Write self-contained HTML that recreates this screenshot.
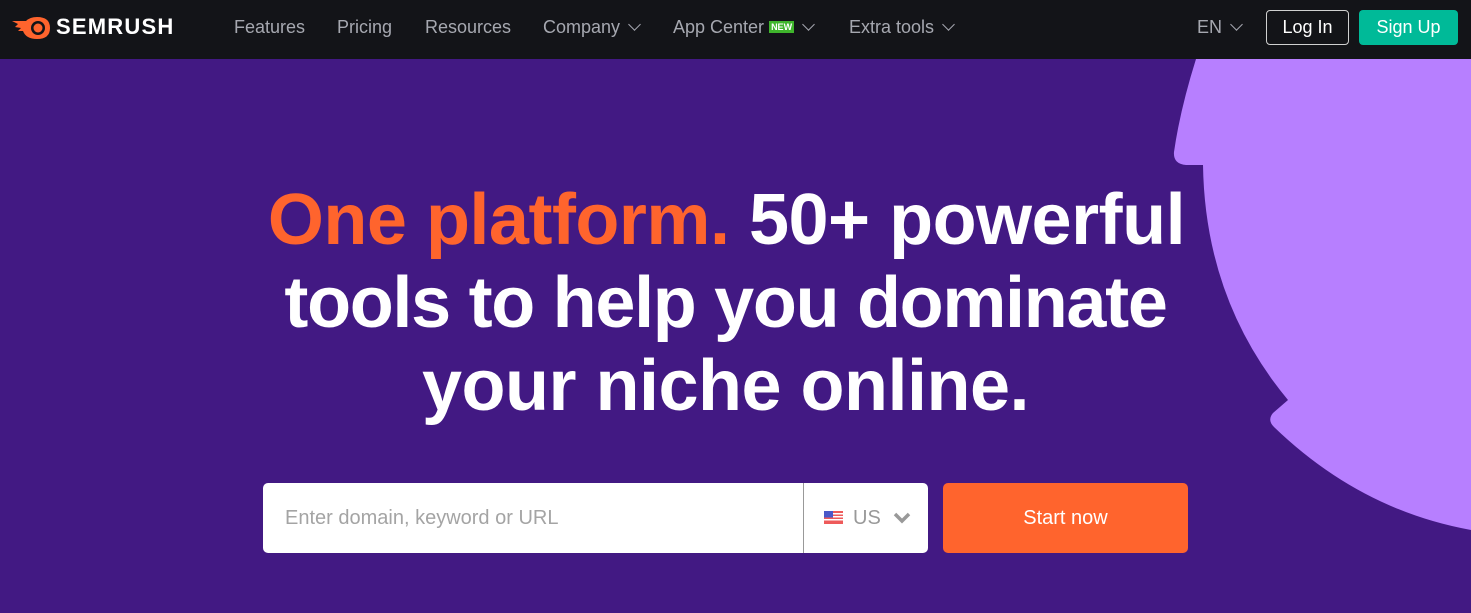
<!DOCTYPE html>
<html><head><meta charset="utf-8"><style>
*{margin:0;padding:0;box-sizing:border-box}
body{width:1471px;height:613px;overflow:hidden;background:#421983;font-family:"Liberation Sans",sans-serif;position:relative}
.nav{position:absolute;left:0;top:0;width:1471px;height:59px;background:#131418}
.nav .it{position:absolute;top:17px;font-size:18px;color:#a6a8b0}
.chev{display:inline-block;width:9px;height:9px;border-right:1.5px solid #a6a8b0;border-bottom:1.5px solid #a6a8b0;transform:rotate(45deg);margin-left:10px;position:relative;top:-4px}
.logo{position:absolute;left:56px;top:14px;font-size:22px;font-weight:bold;color:#fff;letter-spacing:1.2px}
.h{position:absolute;left:0;width:1471px;text-align:center;font-weight:bold;font-size:72px;color:#fff;white-space:nowrap;letter-spacing:-0.5px}
.o{color:#ff642d}
</style></head><body>
<svg style="position:absolute;left:0;top:0" width="1471" height="613">
<path d="M1196 59 Q1180 110 1174 152 Q1173 164 1186 165 L1203 165 Q1205 300 1288 400 L1273 413 Q1267 420 1274 427 Q1360 510 1471 530 L1471 59 Z" fill="#b77fff"/>
</svg>
<div class="nav">
<svg style="position:absolute;left:12px;top:16px" width="40" height="24" viewBox="0 0 40 24">
<path d="M0 5 L14 5 Q18 1 25 1 Q38 1 38 12 Q38 23 25 23 Q14 23 11 15 L6 15 L9 12 L3 11 L6 8 Z" fill="#ff642d"/>
<circle cx="26" cy="12" r="7" fill="#131418"/><circle cx="26" cy="12" r="4.5" fill="#ff642d"/>
</svg>
<div class="logo">SEMRUSH</div>
<div class="it" style="left:234px">Features</div>
<div class="it" style="left:337px">Pricing</div>
<div class="it" style="left:425px">Resources</div>
<div class="it" style="left:543px">Company<span class="chev"></span></div>
<div class="it" style="left:673px">App Center <span style="display:inline-block;background:#3fb52c;color:#fff;font-size:9px;font-weight:bold;padding:1px 2px;vertical-align:3px">NEW</span><span class="chev"></span></div>
<div class="it" style="left:849px">Extra tools<span class="chev"></span></div>
<div class="it" style="left:1197px">EN<span class="chev"></span></div>
<div style="position:absolute;left:1266px;top:10px;width:83px;height:35px;border:1px solid #d0d0d0;border-radius:4px;color:#fff;font-size:18px;text-align:center;line-height:33px">Log In</div>
<div style="position:absolute;left:1359px;top:10px;width:99px;height:35px;background:#00ba98;border-radius:4px;color:#fff;font-size:18px;text-align:center;line-height:35px">Sign Up</div>
</div>
<div class="h" style="top:179px;left:-9px"><span class="o">One platform.</span> 50+ powerful</div>
<div class="h" style="top:262px;left:-10px;letter-spacing:-1.3px">tools to help you dominate</div>
<div class="h" style="top:345px;left:-10px">your niche online.</div>
<div style="position:absolute;left:263px;top:483px;width:665px;height:70px;background:#fff;border-radius:5px"></div>
<div style="position:absolute;left:285px;top:507px;font-size:20px;color:#a4a4a4">Enter domain, keyword or URL</div>
<div style="position:absolute;left:803px;top:483px;width:1px;height:70px;background:#999"></div>
<svg style="position:absolute;left:824px;top:511px" width="19" height="13"><rect width="19" height="13" fill="#ee5a5a"/><rect y="2" width="19" height="1.5" fill="#fff"/><rect y="5" width="19" height="1.5" fill="#fff"/><rect y="8" width="19" height="1.5" fill="#fff"/><rect width="9" height="6.5" fill="#4a58c8"/></svg>
<div style="position:absolute;left:853px;top:507px;font-size:20px;color:#999">US</div>
<svg style="position:absolute;left:893px;top:512px" width="18" height="12"><path d="M2 2 L9 9 L16 2" stroke="#999" stroke-width="3.5" fill="none"/></svg>
<div style="position:absolute;left:943px;top:483px;width:245px;height:70px;background:#ff642d;border-radius:5px;color:#fff;font-size:20px;text-align:center;line-height:70px">Start now</div>
</body></html>
